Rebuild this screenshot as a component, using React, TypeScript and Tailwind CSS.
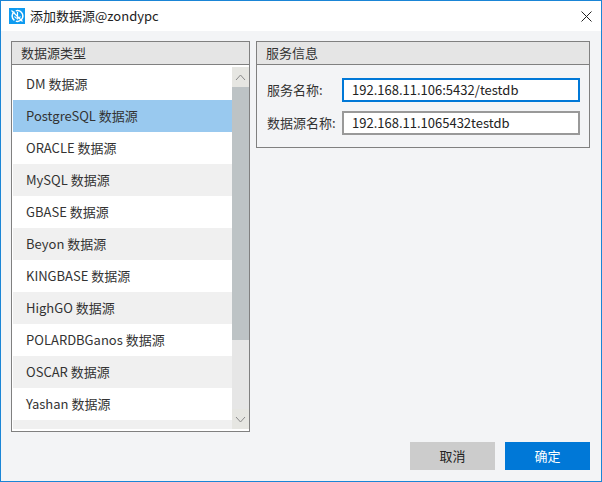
const FONT = "font-['Noto_Sans_CJK_SC','Noto_Sans',sans-serif]";

const sources = [
  "DM 数据源",
  "PostgreSQL 数据源",
  "ORACLE 数据源",
  "MySQL 数据源",
  "GBASE 数据源",
  "Beyon 数据源",
  "KINGBASE 数据源",
  "HighGO 数据源",
  "POLARDBGanos 数据源",
  "OSCAR 数据源",
  "Yashan 数据源",
  "",
];

function AppIcon() {
  return (
    <svg width="16" height="16" viewBox="0 0 16 16" className="shrink-0">
      <rect width="16" height="16" fill="#0f9bf0" />
      <circle cx="8.5" cy="8" r="5.4" fill="none" stroke="#fff" strokeWidth="1.5" strokeDasharray="10 1.5" />
      <path d="M2.5 2.5l11 11M8.5 4v7.5M5.5 8.5c1.5 2.4 4.5 2.4 6 0" fill="none" stroke="#fff" strokeWidth="1.2" />
    </svg>
  );
}

function Chevron({ down }: { down?: boolean }) {
  return (
    <svg width="11" height="7" viewBox="0 0 11 7">
      <path d={down ? "M1 1l4.5 5L10 1" : "M1 6l4.5-5L10 6"} fill="none" stroke="#8a8a8a" strokeWidth="1" />
    </svg>
  );
}

function Field({ label, value, focused }: { label: string; value: string; focused?: boolean }) {
  return (
    <div className="flex items-center">
      <span className="w-[75px] shrink-0 text-[13px] leading-[18px] text-[#333]">{label}</span>
      <div
        className={`flex h-[24px] w-[238px] items-center border-2 bg-white pl-[8px] text-[13px] text-[#222] ${
          focused ? "border-[#0078d7]" : "border-[#999]"
        }`}
      >
        {value}
      </div>
    </div>
  );
}

export default function App() {
  return (
    <div className={`flex h-[482px] w-[602px] flex-col overflow-hidden border border-[#1a85d6] bg-[#f3f4f6] ${FONT}`}>
      <div className="flex h-[30px] shrink-0 items-center bg-white pl-[8px] pr-[9px]">
        <AppIcon />
        <span className="ml-[5px] text-[13px] text-[#222]">添加数据源@zondypc</span>
        <svg width="11" height="11" viewBox="0 0 11 11" className="ml-auto">
          <path d="M.5.5l10 10M10.5.5l-10 10" fill="none" stroke="#222" strokeWidth="1" />
        </svg>
      </div>

      <div className="flex min-h-0 flex-1 gap-[6px] pl-[10px] pr-[10px] pt-[10px]">
        <div className="flex h-[391px] w-[239px] flex-col border border-[#808080]">
          <div className="flex h-[23px] shrink-0 items-center border-b border-[#808080] bg-[#e5e5e5] pl-[9px] text-[13px] text-[#333]">
            数据源类型
          </div>
          <div className="flex min-h-0 flex-1 overflow-hidden bg-white pb-[2px] pl-[1px] pt-[2px]">
            <div className="min-w-0 flex-1 overflow-hidden pt-[1px]">
              {sources.map((name, i) => (
                <div
                  key={i}
                  className={`flex h-[32px] items-center pl-[13px] text-[13px] text-[#333] ${
                    i === 1 ? "bg-[#99c9ef]" : i % 2 === 1 ? "bg-[#f0f0f0]" : "bg-white"
                  }`}
                >
                  {name}
                </div>
              ))}
            </div>
            <div className="flex w-[17px] shrink-0 flex-col bg-[#e6e6e6]">
              <div className="flex h-[20px] items-center justify-center bg-[#e6e6e2]">
                <Chevron />
              </div>
              <div className="h-[253px] bg-[#bdc3c5]" />
              <div className="flex-1" />
              <div className="flex h-[20px] items-center justify-center bg-[#e6e6e2]">
                <Chevron down />
              </div>
            </div>
          </div>
        </div>

        <div className="flex h-[107px] w-[334px] flex-col border border-[#808080]">
          <div className="flex h-[23px] shrink-0 items-center border-b border-[#808080] bg-[#e5e5e5] pl-[9px] text-[13px] text-[#333]">
            服务信息
          </div>
          <div className="flex flex-col gap-[9px] pl-[10px] pt-[13px]">
            <Field label="服务名称:" value="192.168.11.106:5432/testdb" focused />
            <Field label="数据源名称:" value="192.168.11.1065432testdb" />
          </div>
        </div>
      </div>

      <div className="flex shrink-0 justify-end gap-[10px] pb-[11px] pr-[11px]">
        <button className="h-[28px] w-[85px] bg-[#cccccc] text-[13px] text-[#222]">取消</button>
        <button className="h-[28px] w-[85px] bg-[#0078d7] text-[13px] text-white">确定</button>
      </div>
    </div>
  );
}
